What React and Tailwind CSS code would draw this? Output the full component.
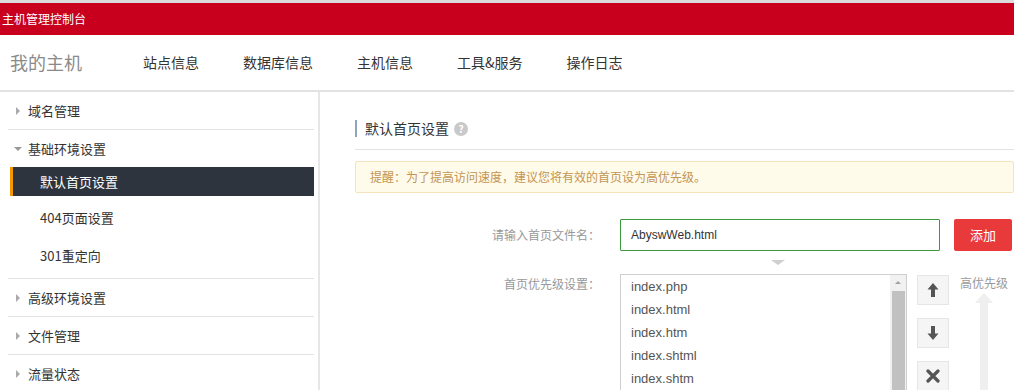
import React from 'react';

const cjk = { fontFamily: '"Microsoft YaHei", "Noto Sans CJK SC", "Liberation Sans", sans-serif' };
const latin = { fontFamily: '"Liberation Sans", "Noto Sans CJK SC", sans-serif' };

const navItems = ['站点信息', '数据库信息', '主机信息', '工具&服务', '操作日志'];
const files = ['index.php', 'index.html', 'index.htm', 'index.shtml', 'index.shtm'];

const Caret = ({ open }) =>
  open ? (
    <svg width="8" height="8" viewBox="0 0 8 8" className="mr-[6px]">
      <path d="M0 2 L8 2 L4 6 Z" fill="#999" />
    </svg>
  ) : (
    <svg width="8" height="8" viewBox="0 0 8 8" className="mr-[6px]">
      <path d="M2 0 L6 4 L2 8 Z" fill="#aaa" />
    </svg>
  );

const SideGroup = ({ label }) => (
  <div className="flex items-center h-[38px] border-b border-[#e3e3e3] pl-[6px] text-[13px] text-[#333]">
    <Caret />
    {label}
  </div>
);

const App = () => {
  return (
    <div className="w-[1014px] h-[390px] overflow-hidden bg-white" style={cjk}>
      {/* top bar */}
      <div className="h-[3px] bg-[#dcdcdc]" />
      <div className="h-[32px] bg-[#c8001d] flex items-center pl-[2px] text-[12px] text-white">
        主机管理控制台
      </div>

      {/* nav */}
      <div className="h-[57px] flex items-center border-b-2 border-[#e2e2e2]">
        <div className="w-[143px] pl-[10px] text-[18px] text-[#8a8a8a]">我的主机</div>
        <div className="flex gap-[44px] text-[14px] text-[#333]">
          {navItems.map((n) => (
            <span key={n}>{n}</span>
          ))}
        </div>
      </div>

      <div className="flex">
        {/* sidebar */}
        <div className="w-[320px] shrink-0 border-r-2 border-[#e6e6e6] pl-[8px] pr-[4px]">
          <SideGroup label="域名管理" />
          <div className="border-b border-[#e3e3e3] pb-[4px]">
            <div className="flex items-center h-[37px] pl-[6px] text-[13px] text-[#333]">
              <Caret open />
              基础环境设置
            </div>
            <div className="ml-[2px] h-[29px] flex items-center bg-[#2e343e] border-l-[3px] border-[#f39800] pl-[27px] text-[13px] text-white">
              默认首页设置
            </div>
            <div className="mt-[3px] h-[38px] flex items-center pl-[32px] text-[13px] text-[#333]">404页面设置</div>
            <div className="h-[37px] flex items-center pl-[32px] text-[13px] text-[#333]">301重定向</div>
          </div>
          <SideGroup label="高级环境设置" />
          <SideGroup label="文件管理" />
          <SideGroup label="流量状态" />
        </div>

        {/* content */}
        <div className="flex-1 pl-[35px]">
          <div className="h-[58px] flex items-center pt-[16px] border-b border-[#e3e3e3]">
            <div className="w-[2px] h-[17px] bg-[#8fa4bd] mr-[8px]" />
            <span className="text-[14px] text-[#333]">默认首页设置</span>
            <span className="ml-[5px] w-[14px] h-[14px] rounded-full bg-[#c9c9c9] text-white text-[10px] font-bold flex items-center justify-center leading-none">
              ?
            </span>
          </div>

          <div className="mt-[11px] h-[32px] flex items-center bg-[#fffbea] border border-[#f3e4bd] rounded-[2px] pl-[14px] text-[12px] text-[#c39453]">
            提醒：为了提高访问速度，建议您将有效的首页设为高优先级。
          </div>

          {/* input row */}
          <div className="mt-[26px] flex items-center">
            <div className="w-[265px] text-right pr-[20px] text-[12px] text-[#999]">请输入首页文件名：</div>
            <div
              className="w-[320px] h-[32px] border border-[#3c9a3c] flex items-center pl-[10px] text-[12px] text-[#333] rounded-[1px]"
              style={latin}
            >
              AbyswWeb.html
            </div>
            <button className="ml-[14px] w-[58px] h-[32px] bg-[#e8393b] text-white text-[13px] rounded-[2px]">添加</button>
          </div>
          <div className="pl-[416px] h-[23px] flex items-start pt-[9px]">
            <svg width="14" height="5" viewBox="0 0 14 5">
              <path d="M0 0 L14 0 L7 5 Z" fill="#cfcfcf" />
            </svg>
          </div>

          {/* priority */}
          <div className="flex items-start">
            <div className="w-[265px] text-right pr-[20px] text-[12px] text-[#999] pt-[1px]">首页优先级设置：</div>
            <div className="w-[287px] h-[130px] border border-[#cfcfcf] flex">
              <div className="flex-1 text-[13px] text-[#555] pl-[10px]" style={latin}>
                {files.map((f) => (
                  <div key={f} className="h-[23px] flex items-center">
                    {f}
                  </div>
                ))}
              </div>
              <div className="w-[16px] bg-[#f1f1f1] flex flex-col items-center">
                <svg width="16" height="16" viewBox="0 0 16 16">
                  <path d="M5 9 L8 6 L11 9 Z" fill="#a3a3a3" />
                </svg>
                <div className="w-[13px] flex-1 bg-[#c1c1c1] mb-[12px]" />
              </div>
            </div>

            <div className="ml-[10px] flex flex-col gap-[13px] pt-[1px]">
              <div className="w-[32px] h-[30px] bg-[#f5f5f5] border border-[#e6e6e6] flex items-center justify-center">
                <svg width="12" height="16" viewBox="0 0 12 16">
                  <path d="M6 1 L11.5 7.5 L8 7.5 L8 15 L4 15 L4 7.5 L0.5 7.5 Z" fill="#555" />
                </svg>
              </div>
              <div className="w-[32px] h-[30px] bg-[#f5f5f5] border border-[#e6e6e6] flex items-center justify-center">
                <svg width="12" height="16" viewBox="0 0 12 16">
                  <path d="M6 15 L11.5 8.5 L8 8.5 L8 1 L4 1 L4 8.5 L0.5 8.5 Z" fill="#555" />
                </svg>
              </div>
              <div className="w-[32px] h-[30px] bg-[#f5f5f5] border border-[#e6e6e6] flex items-center justify-center">
                <svg width="14" height="14" viewBox="0 0 14 14">
                  <path d="M2 2 L12 12 M12 2 L2 12" stroke="#555" strokeWidth="3.2" strokeLinecap="round" />
                </svg>
              </div>
            </div>

            <div className="ml-[11px] flex flex-col items-center">
              <div className="text-[12px] text-[#9a9a9a] leading-none pt-[3px]">高优先级</div>
              <svg width="20" height="100" viewBox="0 0 20 100" className="mt-[4px]">
                <path d="M10 0 L19 10 L14 10 L14 100 L6 100 L6 10 L1 10 Z" fill="#efefef" />
              </svg>
            </div>
          </div>
        </div>
      </div>
    </div>
  );
};

export default App;
